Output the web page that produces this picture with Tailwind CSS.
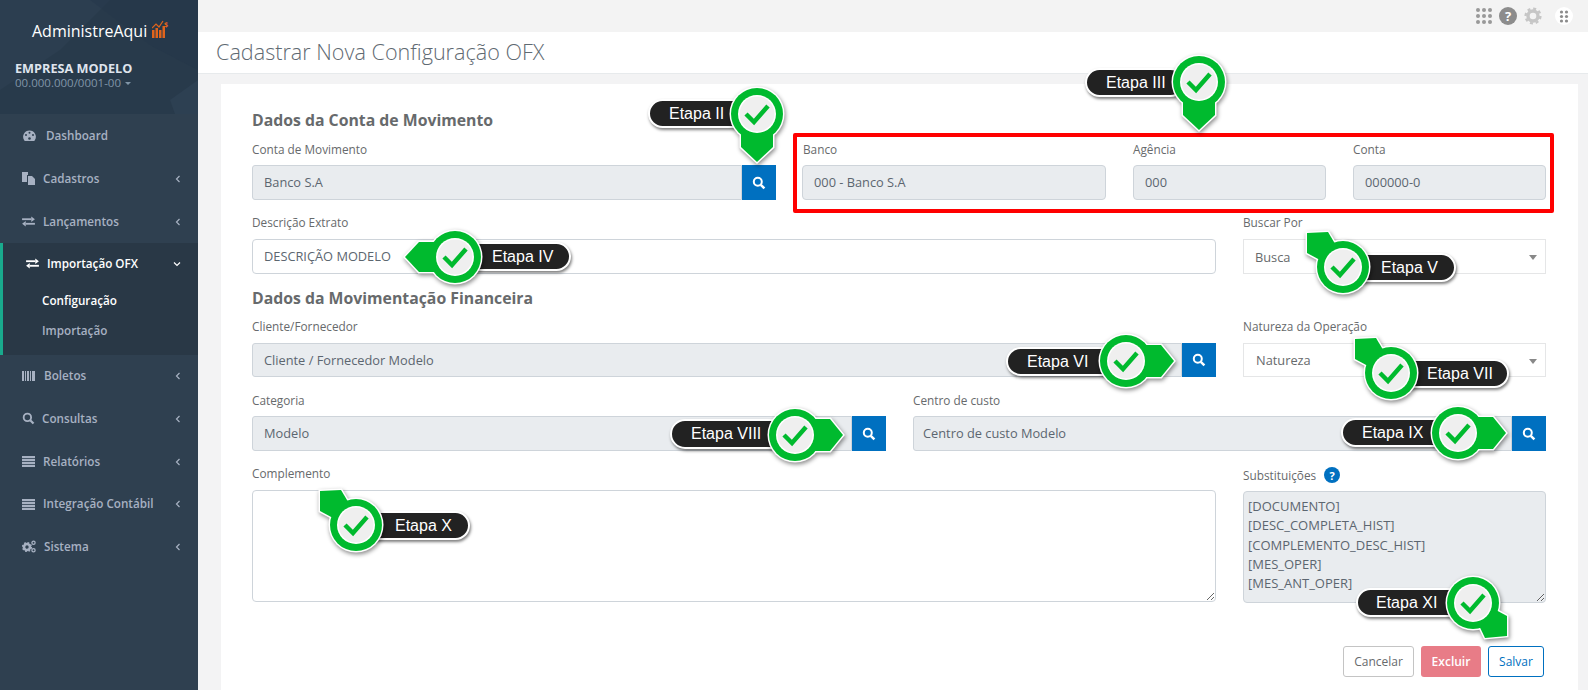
<!DOCTYPE html>
<html lang="pt-BR">
<head>
  <meta charset="UTF-8">
  <title>Cadastrar Nova Configuração OFX</title>
  <script src="https://cdn.jsdelivr.net/npm/@tailwindcss/browser@4"></script>
</head>
<body class="bg-[#f3f3f4]">
<svg class="absolute w-0 h-0">
  <defs>
    <symbol id="face" viewBox="-60 -60 120 120">
      <circle r="19" fill="#fff"/>
      <circle r="17.5" fill="#efefef"/>
      <polyline points="-11,0 -3,8 11,-8" fill="none" stroke="#00ba2e" stroke-width="4.5"/>
    </symbol>
    <symbol id="pin-down" viewBox="-60 -60 120 120">
      <circle r="27.5" fill="#fff"/>
      <polygon points="-16,15 16,15 16,33 0,48 -16,33" fill="#fff" stroke="#fff" stroke-width="3"/>
      <circle r="26" fill="#00ba2e"/>
      <polygon points="-16,15 16,15 16,33 0,48 -16,33" fill="#00ba2e"/>
      <use href="#face" x="-60" y="-60" width="120" height="120"/>
    </symbol>
    <symbol id="pin-left" viewBox="-60 -60 120 120">
      <circle r="27.5" fill="#fff"/>
      <polygon points="-36,-15 -50,0 -36,15 0,15 0,-15" fill="#fff" stroke="#fff" stroke-width="3"/>
      <circle r="26" fill="#00ba2e"/>
      <polygon points="-36,-15 -50,0 -36,15 0,15 0,-15" fill="#00ba2e"/>
      <use href="#face" x="-60" y="-60" width="120" height="120"/>
    </symbol>
    <symbol id="pin-right" viewBox="-60 -60 120 120">
      <circle r="27.5" fill="#fff"/>
      <polygon points="35,-16 48,0 35,16 0,16 0,-16" fill="#fff" stroke="#fff" stroke-width="3"/>
      <circle r="26" fill="#00ba2e"/>
      <polygon points="35,-16 48,0 35,16 0,16 0,-16" fill="#00ba2e"/>
      <use href="#face" x="-60" y="-60" width="120" height="120"/>
    </symbol>
    <symbol id="pin-up" viewBox="-60 -60 120 120">
      <circle r="27.5" fill="#fff"/>
      <polygon points="-36,-34 -15,-35 0,-10 -10,0 -36,-14" fill="#fff" stroke="#fff" stroke-width="3"/>
      <circle r="26" fill="#00ba2e"/>
      <polygon points="-36,-34 -15,-35 0,-10 -10,0 -36,-14" fill="#00ba2e"/>
      <use href="#face" x="-60" y="-60" width="120" height="120"/>
    </symbol>
    <symbol id="pin-corner" viewBox="-60 -60 120 120">
      <circle r="27.5" fill="#fff"/>
      <polygon points="34,13 34,33 12,35 0,10 10,0" fill="#fff" stroke="#fff" stroke-width="3"/>
      <circle r="26" fill="#00ba2e"/>
      <polygon points="34,13 34,33 12,35 0,10 10,0" fill="#00ba2e"/>
      <use href="#face" x="-60" y="-60" width="120" height="120"/>
    </symbol>
    <symbol id="search" viewBox="0 0 14 14">
      <circle cx="5.8" cy="5.8" r="4" fill="none" stroke="currentColor" stroke-width="2"/>
      <line x1="8.8" y1="8.8" x2="12.4" y2="12.4" stroke="currentColor" stroke-width="2.4"/>
    </symbol>
    <symbol id="exchange" viewBox="0 0 14 12">
      <rect x="0" y="2.5" width="10" height="2" fill="currentColor"/>
      <polygon points="10,0.5 14,3.5 10,6.5" fill="currentColor"/>
      <rect x="4" y="7.5" width="10" height="2" fill="currentColor"/>
      <polygon points="4,5.5 0,8.5 4,11.5" fill="currentColor"/>
    </symbol>
    <symbol id="list" viewBox="0 0 13 11">
      <rect width="13" height="2.2" fill="currentColor"/>
      <rect y="3" width="13" height="2.2" fill="currentColor"/>
      <rect y="6" width="13" height="2.2" fill="currentColor"/>
      <rect y="9" width="13" height="2" fill="currentColor"/>
    </symbol>
    <symbol id="chev" viewBox="0 0 6 8">
      <polyline points="4.5,1 1.5,4 4.5,7" fill="none" stroke="currentColor" stroke-width="1.2"/>
    </symbol>
  </defs>
</svg>

<div class="relative flex w-[1588px] h-[690px] overflow-hidden font-['Open_Sans',sans-serif] text-[11.7px] text-[#676a6c]">

  <!-- sidebar -->
  <aside class="w-[198px] shrink-0 bg-[#2f4050] text-[#a7b1c2] font-semibold">
    <div class="relative h-[114px] bg-[#283a4b] overflow-hidden">
      <svg class="absolute inset-0 w-full h-full" viewBox="0 0 198 114">
        <polygon points="0,0 110,0 60,50 0,90" fill="#2c3e50"/>
        <polygon points="90,0 198,0 198,70 150,45" fill="#24364a" opacity="0.5"/>
        <polygon points="170,100 198,80 198,114 175,114" fill="#2d4052"/>
      </svg>
      <div class="relative flex items-center pt-[20px] pl-[32px] h-[42px]">
        <span class="text-[16px] leading-[22px] font-normal text-white">AdministreAqui</span>
        <svg class="ml-[5px] -mt-[5px] w-[17px] h-[18px]" viewBox="0 0 17 18">
          <rect x="0" y="10" width="2.5" height="8" fill="#e0641c"/>
          <rect x="3.5" y="8" width="2.5" height="10" fill="#e0641c"/>
          <rect x="7" y="10" width="2.5" height="8" fill="#e0641c"/>
          <rect x="10.5" y="6" width="2.5" height="12" fill="#e0641c"/>
          <polyline points="0,8 4,4 7,7 11,1" fill="none" stroke="#e0641c" stroke-width="1.2"/>
          <text x="12" y="7" font-size="7" font-weight="700" fill="#e0641c">$</text>
        </svg>
      </div>
      <div class="relative pl-[15px] pt-[19px]">
        <div class="text-[12.7px] leading-[15px] font-bold text-[#dfe4ed]">EMPRESA MODELO</div>
        <div class="flex items-center text-[11.5px] leading-[14px] font-normal text-[#8095a8]">00.000.000/0001-00
          <span class="ml-[4px] border-x-[3.5px] border-x-transparent border-t-[3.5px] border-t-[#8095a8]"></span>
        </div>
      </div>
    </div>
    <nav>
      <a class="flex items-center h-[43px] pl-[23px] pr-[17px]">
        <svg class="w-[13px] h-[12px] mr-[10px]" viewBox="0 0 13 12"><path d="M6.5 0.5a6.3 6.3 0 0 0-5.4 9.6l0.6 1h9.6l0.6-1A6.3 6.3 0 0 0 6.5 0.5z" fill="currentColor"/><circle cx="6.5" cy="2.8" r="1" fill="#2f4050"/><circle cx="3" cy="5" r="1" fill="#2f4050"/><circle cx="10" cy="5" r="1" fill="#2f4050"/><circle cx="6.5" cy="8.5" r="1.3" fill="#2f4050"/></svg>
        <span>Dashboard</span>
      </a>
      <a class="flex items-center h-[43px] pl-[22px] pr-[17px]">
        <svg class="w-[13px] h-[13px] mr-[8px]" viewBox="0 0 13 13"><path d="M0 0h6v3H5v7H0z" fill="currentColor"/><path d="M6 4h4l3 3v6H6z" fill="currentColor"/></svg>
        <span>Cadastros</span>
        <svg class="ml-auto w-[6px] h-[8px]"><use href="#chev"/></svg>
      </a>
      <a class="flex items-center h-[43px] pl-[22px] pr-[17px]">
        <svg class="w-[13px] h-[11px] mr-[8px]"><use href="#exchange"/></svg>
        <span>Lançamentos</span>
        <svg class="ml-auto w-[6px] h-[8px]"><use href="#chev"/></svg>
      </a>
      <div class="h-[112px] bg-[#293846] border-l-[3px] border-[#19aa8d]">
        <a class="flex items-center h-[41px] pl-[23px] pr-[17px] text-white">
          <svg class="w-[13px] h-[11px] mr-[8px]"><use href="#exchange"/></svg>
          <span>Importação OFX</span>
          <svg class="ml-auto w-[8px] h-[6px]" viewBox="0 0 8 6"><polyline points="1,1.5 4,4.5 7,1.5" fill="none" stroke="currentColor" stroke-width="1.2"/></svg>
        </a>
        <a class="block pl-[39px] mt-[7px] leading-[18px] h-[30px] text-white">Configuração</a>
        <a class="block pl-[39px] leading-[18px] h-[30px]">Importação</a>
      </div>
      <a class="flex items-center h-[42px] pl-[22px] pr-[17px]">
        <svg class="w-[13px] h-[10px] mr-[9px]" viewBox="0 0 13 10"><path d="M0 0h2v10H0zM3 0h1v10H3zM5 0h2v10H5zM8 0h1v10H8zM10 0h3v10h-3z" fill="currentColor"/></svg>
        <span>Boletos</span>
        <svg class="ml-auto w-[6px] h-[8px]"><use href="#chev"/></svg>
      </a>
      <a class="flex items-center h-[43px] pl-[22px] pr-[17px]">
        <svg class="w-[13px] h-[13px] mr-[7px]"><use href="#search"/></svg>
        <span>Consultas</span>
        <svg class="ml-auto w-[6px] h-[8px]"><use href="#chev"/></svg>
      </a>
      <a class="flex items-center h-[43px] pl-[22px] pr-[17px]">
        <svg class="w-[13px] h-[11px] mr-[8px]"><use href="#list"/></svg>
        <span>Relatórios</span>
        <svg class="ml-auto w-[6px] h-[8px]"><use href="#chev"/></svg>
      </a>
      <a class="flex items-center h-[42px] pl-[22px] pr-[17px]">
        <svg class="w-[13px] h-[11px] mr-[8px]"><use href="#list"/></svg>
        <span>Integração Contábil</span>
        <svg class="ml-auto w-[6px] h-[8px]"><use href="#chev"/></svg>
      </a>
      <a class="flex items-center h-[43px] pl-[22px] pr-[17px]">
        <svg class="w-[14px] h-[13px] mr-[8px]" viewBox="0 0 14 13"><circle cx="5" cy="7" r="3" fill="none" stroke="currentColor" stroke-width="2.6"/><circle cx="5" cy="7" r="4.4" fill="none" stroke="currentColor" stroke-width="1.4" stroke-dasharray="1.7 1.75"/><circle cx="11.5" cy="2.8" r="1.6" fill="none" stroke="currentColor" stroke-width="1.3"/><circle cx="11.5" cy="10.2" r="1.6" fill="none" stroke="currentColor" stroke-width="1.3"/></svg>
        <span>Sistema</span>
        <svg class="ml-auto w-[6px] h-[8px]"><use href="#chev"/></svg>
      </a>
    </nav>
  </aside>

  <!-- main column -->
  <main class="flex-1 min-w-0">
    <div class="flex items-center justify-end h-[32px] pr-[15px] bg-[#f3f3f3]">
      <svg class="w-[18px] h-[18px] mr-[6px]" viewBox="0 0 18 18" fill="#999"><circle cx="3" cy="3" r="2"/><circle cx="9" cy="3" r="2"/><circle cx="15" cy="3" r="2"/><circle cx="3" cy="9" r="2"/><circle cx="9" cy="9" r="2"/><circle cx="15" cy="9" r="2"/><circle cx="3" cy="15" r="2"/><circle cx="9" cy="15" r="2"/><circle cx="15" cy="15" r="2"/></svg>
      <span class="flex items-center justify-center w-[18px] h-[18px] rounded-full bg-[#8c8c8c] text-white text-[13px] leading-none font-bold">?</span>
      <svg class="w-[18px] h-[18px] ml-[7px]" viewBox="0 0 18 18"><circle cx="9" cy="9" r="5" fill="none" stroke="#c6c6c6" stroke-width="3.4"/><circle cx="9" cy="9" r="7.4" fill="none" stroke="#c6c6c6" stroke-width="2.4" stroke-dasharray="3 2.8"/></svg>
      <svg class="w-[18px] h-[18px] ml-[13px] shrink-0" viewBox="0 0 18 18"><circle cx="9" cy="9" r="9" fill="#fff"/><g fill="#8c8c8c"><circle cx="6.5" cy="5" r="1.6"/><circle cx="11.5" cy="5" r="1.6"/><circle cx="6.5" cy="9.5" r="1.6"/><circle cx="11.5" cy="9.5" r="1.6"/><circle cx="6.5" cy="14" r="1.6"/><circle cx="11.5" cy="14" r="1.6"/></g></svg>
    </div>
    <div class="flex items-center h-[42px] pl-[18px] bg-white border-b border-[#e7eaec]">
      <h1 class="text-[21.6px] font-light text-[#5f6a72]">Cadastrar Nova Configuração OFX</h1>
    </div>

    <div class="ml-[23px] mr-[10px] mt-[10px] h-[606px] bg-white pl-[31px] pr-[32px] pt-[25px] text-[12.8px]">
      <h2 class="h-[24px] text-[15.8px] leading-[22px] font-bold text-[#676a6c]">Dados da Conta de Movimento</h2>

      <div class="flex">
        <div class="w-[524px] shrink-0 mr-[17px] pt-[8px]">
          <label class="block h-[24px] text-[11.8px] leading-[17px]">Conta de Movimento</label>
          <div class="flex h-[35px]">
            <div class="flex-1 flex items-center pl-[11px] bg-[#e9ecef] border border-[#ced4da] rounded-l-[3px] text-[#5c6670]">Banco S.A</div>
            <button class="flex items-center justify-center w-[34px] bg-[#0070c0] text-white"><svg class="w-[14px] h-[14px]"><use href="#search"/></svg></button>
          </div>
        </div>
        <div class="flex shrink-0 w-[761px] h-[80px] pt-[4px] pl-[5px] border-[4px] border-[#ff0000] rounded-[2px]">
          <div class="w-[304px] mr-[27px]">
            <label class="block h-[24px] pl-[1px] text-[11.8px] leading-[17px]">Banco</label>
            <div class="flex items-center h-[35px] pl-[11px] bg-[#e9ecef] border border-[#ced4da] rounded-[4px] text-[#5c6670]">000 - Banco S.A</div>
          </div>
          <div class="w-[193px] mr-[27px]">
            <label class="block h-[24px] text-[11.8px] leading-[17px]">Agência</label>
            <div class="flex items-center h-[35px] pl-[11px] bg-[#e9ecef] border border-[#ced4da] rounded-[4px] text-[#5c6670]">000</div>
          </div>
          <div class="w-[193px]">
            <label class="block h-[24px] text-[11.8px] leading-[17px]">Conta</label>
            <div class="flex items-center h-[35px] pl-[11px] bg-[#e9ecef] border border-[#ced4da] rounded-[4px] text-[#5c6670]">000000-0</div>
          </div>
        </div>
      </div>

      <div class="flex mt-[1px]">
        <div class="w-[964px] mr-[27px]">
          <label class="block h-[25px] text-[11.8px] leading-[17px]">Descrição Extrato</label>
          <div class="flex items-center h-[35px] pl-[11px] bg-white border border-[#ced4da] rounded-[4px] text-[#5c6670]">DESCRIÇÃO MODELO</div>
        </div>
        <div class="w-[303px]">
          <label class="block h-[25px] text-[11.8px] leading-[17px]">Buscar Por</label>
          <div class="flex items-center justify-between h-[35px] pl-[11px] pr-[8px] pt-[2px] border border-[#e5e6e7]">Busca<span class="border-x-[4px] border-x-transparent border-t-[5px] border-t-[#888]"></span></div>
        </div>
      </div>

      <h2 class="mt-[13px] h-[31px] text-[15.8px] leading-[22px] font-bold text-[#676a6c]">Dados da Movimentação Financeira</h2>

      <div class="flex">
        <div class="w-[964px] mr-[27px]">
          <label class="block h-[25px] text-[11.8px] leading-[17px]">Cliente/Fornecedor</label>
          <div class="flex h-[34px]">
            <div class="flex-1 flex items-center pl-[11px] pt-[1px] bg-[#e9ecef] border border-[#ced4da] rounded-l-[3px] text-[#5c6670]">Cliente / Fornecedor Modelo</div>
            <button class="flex items-center justify-center w-[34px] bg-[#0070c0] text-white"><svg class="w-[14px] h-[14px]"><use href="#search"/></svg></button>
          </div>
        </div>
        <div class="w-[303px]">
          <label class="block h-[25px] text-[11.8px] leading-[17px]">Natureza da Operação</label>
          <div class="flex items-center justify-between h-[34px] pl-[12px] pr-[8px] pt-[2px] border border-[#e5e6e7]">Natureza<span class="border-x-[4px] border-x-transparent border-t-[5px] border-t-[#888]"></span></div>
        </div>
      </div>

      <div class="flex mt-[15px]">
        <div class="w-[634px] mr-[27px]">
          <label class="block h-[24px] text-[11.8px] leading-[17px]">Categoria</label>
          <div class="flex h-[35px]">
            <div class="flex-1 flex items-center pl-[11px] bg-[#e9ecef] border border-[#ced4da] rounded-l-[3px] text-[#5c6670]">Modelo</div>
            <button class="flex items-center justify-center w-[34px] bg-[#0070c0] text-white"><svg class="w-[14px] h-[14px]"><use href="#search"/></svg></button>
          </div>
        </div>
        <div class="w-[633px]">
          <label class="block h-[24px] text-[11.8px] leading-[17px]">Centro de custo</label>
          <div class="flex h-[35px]">
            <div class="flex-1 flex items-center pl-[9px] bg-[#e9ecef] border border-[#ced4da] rounded-l-[3px] text-[#5c6670]">Centro de custo Modelo</div>
            <button class="flex items-center justify-center w-[34px] bg-[#0070c0] text-white"><svg class="w-[14px] h-[14px]"><use href="#search"/></svg></button>
          </div>
        </div>
      </div>

      <div class="flex mt-[14px]">
        <div class="w-[964px] mr-[27px]">
          <label class="block h-[25px] text-[11.8px] leading-[17px]">Complemento</label>
          <textarea class="block w-full h-[112px] bg-white border border-[#ced4da] rounded-[4px]"></textarea>
        </div>
        <div class="w-[303px]">
          <label class="flex items-center h-[26px] pb-[6px] text-[11.8px] leading-[17px]">Substituições
            <span class="flex items-center justify-center ml-[8px] w-[16px] h-[16px] rounded-full bg-[#0070c0] text-white text-[11px] font-bold">?</span>
          </label>
          <textarea readonly class="block w-full h-[112px] pl-[4px] pt-[5px] text-[13px] leading-[19.3px] bg-[#e9ecef] border border-[#ced4da] rounded-[4px] text-[#5c6670] overflow-hidden">[DOCUMENTO]
[DESC_COMPLETA_HIST]
[COMPLEMENTO_DESC_HIST]
[MES_OPER]
[MES_ANT_OPER]</textarea>
        </div>
      </div>

      <div class="flex justify-end gap-[7px] mt-[43px] pr-[2px] text-[12px]">
        <button class="w-[71px] h-[31px] bg-white border border-[#c4c4c4] rounded-[3px]">Cancelar</button>
        <button class="w-[60px] h-[31px] bg-[#e87c87] text-white font-semibold rounded-[3px]">Excluir</button>
        <button class="w-[56px] h-[31px] bg-white border border-[#0070c0] rounded-[3px] text-[#0070c0]">Salvar</button>
      </div>
    </div>
  </main>

  <!-- step callouts over the form -->
  <div class="absolute left-[648px] top-[99px] w-[100px] h-[29px] pl-[19px] bg-[#222] border-2 border-white rounded-full shadow-[1px_2px_3px_rgba(0,0,0,0.5)] font-['Liberation_Sans',sans-serif] text-[16px] leading-[25px] text-white">Etapa II</div>
  <svg class="absolute left-[697px] top-[54px] w-[120px] h-[120px] drop-shadow-[1px_2px_2px_rgba(0,0,0,0.45)]"><use href="#pin-down"/></svg>

  <div class="absolute left-[1085px] top-[68px] w-[100px] h-[29px] pl-[19px] bg-[#222] border-2 border-white rounded-full shadow-[1px_2px_3px_rgba(0,0,0,0.5)] font-['Liberation_Sans',sans-serif] text-[16px] leading-[25px] text-white">Etapa III</div>
  <svg class="absolute left-[1139px] top-[22px] w-[120px] h-[120px] drop-shadow-[1px_2px_2px_rgba(0,0,0,0.45)]"><use href="#pin-down"/></svg>

  <div class="absolute left-[450px] top-[242px] w-[121px] h-[29px] pl-[40px] bg-[#222] border-2 border-white rounded-full shadow-[1px_2px_3px_rgba(0,0,0,0.5)] font-['Liberation_Sans',sans-serif] text-[16px] leading-[25px] text-white">Etapa IV</div>
  <svg class="absolute left-[395px] top-[197px] w-[120px] h-[120px] drop-shadow-[1px_2px_2px_rgba(0,0,0,0.45)]"><use href="#pin-left"/></svg>

  <div class="absolute left-[1335px] top-[253px] w-[121px] h-[29px] pl-[44px] bg-[#222] border-2 border-white rounded-full shadow-[1px_2px_3px_rgba(0,0,0,0.5)] font-['Liberation_Sans',sans-serif] text-[16px] leading-[25px] text-white">Etapa V</div>
  <svg class="absolute left-[1283px] top-[207px] w-[120px] h-[120px] drop-shadow-[1px_2px_2px_rgba(0,0,0,0.45)]"><use href="#pin-up"/></svg>

  <div class="absolute left-[1006px] top-[347px] w-[125px] h-[29px] pl-[19px] bg-[#222] border-2 border-white rounded-full shadow-[1px_2px_3px_rgba(0,0,0,0.5)] font-['Liberation_Sans',sans-serif] text-[16px] leading-[25px] text-white">Etapa VI</div>
  <svg class="absolute left-[1066px] top-[301px] w-[120px] h-[120px] drop-shadow-[1px_2px_2px_rgba(0,0,0,0.45)]"><use href="#pin-right"/></svg>

  <div class="absolute left-[1380px] top-[359px] w-[129px] h-[29px] pl-[45px] bg-[#222] border-2 border-white rounded-full shadow-[1px_2px_3px_rgba(0,0,0,0.5)] font-['Liberation_Sans',sans-serif] text-[16px] leading-[25px] text-white">Etapa VII</div>
  <svg class="absolute left-[1331px] top-[313px] w-[120px] h-[120px] drop-shadow-[1px_2px_2px_rgba(0,0,0,0.45)]"><use href="#pin-up"/></svg>

  <div class="absolute left-[670px] top-[419px] w-[130px] h-[30px] pl-[19px] bg-[#222] border-2 border-white rounded-full shadow-[1px_2px_3px_rgba(0,0,0,0.5)] font-['Liberation_Sans',sans-serif] text-[16px] leading-[26px] text-white">Etapa VIII</div>
  <svg class="absolute left-[735px] top-[375px] w-[120px] h-[120px] drop-shadow-[1px_2px_2px_rgba(0,0,0,0.45)]"><use href="#pin-right"/></svg>

  <div class="absolute left-[1341px] top-[418px] w-[120px] h-[29px] pl-[19px] bg-[#222] border-2 border-white rounded-full shadow-[1px_2px_3px_rgba(0,0,0,0.5)] font-['Liberation_Sans',sans-serif] text-[16px] leading-[25px] text-white">Etapa IX</div>
  <svg class="absolute left-[1398px] top-[373px] w-[120px] h-[120px] drop-shadow-[1px_2px_2px_rgba(0,0,0,0.45)]"><use href="#pin-right"/></svg>

  <div class="absolute left-[350px] top-[511px] w-[120px] h-[29px] pl-[43px] bg-[#222] border-2 border-white rounded-full shadow-[1px_2px_3px_rgba(0,0,0,0.5)] font-['Liberation_Sans',sans-serif] text-[16px] leading-[25px] text-white">Etapa X</div>
  <svg class="absolute left-[296px] top-[465px] w-[120px] h-[120px] drop-shadow-[1px_2px_2px_rgba(0,0,0,0.45)]"><use href="#pin-up"/></svg>

  <div class="absolute left-[1356px] top-[588px] w-[120px] h-[29px] pl-[18px] bg-[#222] border-2 border-white rounded-full shadow-[1px_2px_3px_rgba(0,0,0,0.5)] font-['Liberation_Sans',sans-serif] text-[16px] leading-[25px] text-white">Etapa XI</div>
  <svg class="absolute left-[1413px] top-[543px] w-[120px] h-[120px] drop-shadow-[1px_2px_2px_rgba(0,0,0,0.45)]"><use href="#pin-corner"/></svg>
</div>
</body>
</html>
